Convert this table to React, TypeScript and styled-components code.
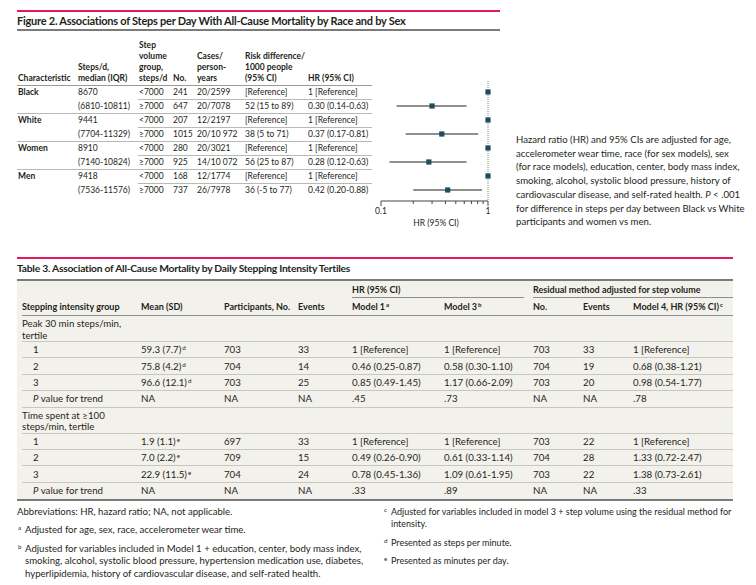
import React from "react";
import styled, { createGlobalStyle } from "styled-components";

const GlobalStyle = createGlobalStyle`
  html, body { margin: 0; padding: 0; background: #fff; }
  body {
    font-family: Lato, "Liberation Sans", sans-serif;
    color: #231f20;
    -webkit-font-smoothing: antialiased;
  }
  *, *::before, *::after { box-sizing: border-box; }
`;

const PINK = "#e6195f";
const RULE = "#7b7b7b";
const BEIGE = "#f3f1eb";
const TEAL = "#1f4d5b";

// ---------- Figure 2 data ----------
type FigRow = {
  name: string;
  median: string;
  iqr: string;
  rows: { group: string; n: string; cases: string; risk: string; hr: string; est?: number; lo?: number; hi?: number }[];
};

const figRows: FigRow[] = [
  {
    name: "Black",
    median: "8670",
    iqr: "(6810-10811)",
    rows: [
      { group: "<7000", n: "241", cases: "20/2599", risk: "[Reference]", hr: "1 [Reference]" },
      { group: "≥7000", n: "647", cases: "20/7078", risk: "52 (15 to 89)", hr: "0.30 (0.14-0.63)", est: 0.3, lo: 0.14, hi: 0.63 },
    ],
  },
  {
    name: "White",
    median: "9441",
    iqr: "(7704-11329)",
    rows: [
      { group: "<7000", n: "207", cases: "12/2197", risk: "[Reference]", hr: "1 [Reference]" },
      { group: "≥7000", n: "1015", cases: "20/10 972", risk: "38 (5 to 71)", hr: "0.37 (0.17-0.81)", est: 0.37, lo: 0.17, hi: 0.81 },
    ],
  },
  {
    name: "Women",
    median: "8910",
    iqr: "(7140-10824)",
    rows: [
      { group: "<7000", n: "280", cases: "20/3021", risk: "[Reference]", hr: "1 [Reference]" },
      { group: "≥7000", n: "925", cases: "14/10 072", risk: "56 (25 to 87)", hr: "0.28 (0.12-0.63)", est: 0.28, lo: 0.12, hi: 0.63 },
    ],
  },
  {
    name: "Men",
    median: "9418",
    iqr: "(7536-11576)",
    rows: [
      { group: "<7000", n: "168", cases: "12/1774", risk: "[Reference]", hr: "1 [Reference]" },
      { group: "≥7000", n: "737", cases: "26/7978", risk: "36 (-5 to 77)", hr: "0.42 (0.20-0.88)", est: 0.42, lo: 0.2, hi: 0.88 },
    ],
  },
];

// ---------- Table 3 data ----------
type T3Row = { label: string; mean: string; sup?: string; cells: string[] };
type T3Group = { label: string[]; rows: T3Row[] };

const t3Groups: T3Group[] = [
  {
    label: ["Peak 30 min steps/min,", "tertile"],
    rows: [
      { label: "1", mean: "59.3 (7.7)", sup: "d", cells: ["703", "33", "1 [Reference]", "1 [Reference]", "703", "33", "1 [Reference]"] },
      { label: "2", mean: "75.8 (4.2)", sup: "d", cells: ["704", "14", "0.46 (0.25-0.87)", "0.58 (0.30-1.10)", "704", "19", "0.68 (0.38-1.21)"] },
      { label: "3", mean: "96.6 (12.1)", sup: "d", cells: ["703", "25", "0.85 (0.49-1.45)", "1.17 (0.66-2.09)", "703", "20", "0.98 (0.54-1.77)"] },
      { label: "P", mean: "NA", cells: ["NA", "NA", ".45", ".73", "NA", "NA", ".78"] },
    ],
  },
  {
    label: ["Time spent at ≥100", "steps/min, tertile"],
    rows: [
      { label: "1", mean: "1.9 (1.1)", sup: "e", cells: ["697", "33", "1 [Reference]", "1 [Reference]", "703", "22", "1 [Reference]"] },
      { label: "2", mean: "7.0 (2.2)", sup: "e", cells: ["709", "15", "0.49 (0.26-0.90)", "0.61 (0.33-1.14)", "704", "28", "1.33 (0.72-2.47)"] },
      { label: "3", mean: "22.9 (11.5)", sup: "e", cells: ["704", "24", "0.78 (0.45-1.36)", "1.09 (0.61-1.95)", "703", "22", "1.38 (0.73-2.61)"] },
      { label: "P", mean: "NA", cells: ["NA", "NA", ".33", ".89", "NA", "NA", ".33"] },
    ],
  },
];

const t3Widths = [119, 83, 74, 54, 92, 89, 50, 50, 100];
const figCols = [60, 61, 34, 24, 48, 63, 65];

// ---------- layout ----------
const Page = styled.div`
  width: 756px;
  height: 585px;
  overflow: hidden;
  padding: 10px 0 0 17px;
`;

const FigureRow = styled.div`
  display: flex;
  gap: 16px;
`;

const Panel = styled.section<{ $width: number }>`
  width: ${(p) => p.$width}px;
  border-top: 2px solid ${PINK};
`;

const Title = styled.h2<{ $size: number; $pad: string }>`
  margin: 0;
  padding: ${(p) => p.$pad};
  font-size: ${(p) => p.$size}px;
  line-height: 13px;
  font-weight: 700;
  letter-spacing: -0.25px;
  white-space: nowrap;
  border-bottom: 2px solid ${RULE};
`;

const FigBody = styled.div`
  display: flex;
  align-items: flex-start;
  margin-top: 9px;
`;

const FigTable = styled.table`
  border-collapse: collapse;
  font-size: 8.5px;
  table-layout: fixed;
  width: 355px;
`;

const Col = styled.col<{ $w: number }>`
  width: ${(p) => p.$w}px;
`;

const FigTh = styled.th`
  text-align: left;
  vertical-align: bottom;
  font-weight: 700;
  line-height: 11px;
  padding: 0 0 1px 1px;
  border-bottom: 1px solid #9a9a9a;
`;

const FigTd = styled.td<{ $line?: boolean; $bold?: boolean }>`
  height: 14px;
  line-height: 13px;
  padding: 0 0 0 1px;
  white-space: nowrap;
  font-weight: ${(p) => (p.$bold ? 700 : 400)};
  border-bottom: 1px solid ${(p) => (p.$line ? "#b8b8b8" : "transparent")};
`;

const Plot = styled.svg`
  display: block;
  flex: none;
`;

const Note = styled.p`
  align-self: flex-end;
  margin: 0;
  width: 224px;
  font-size: 9.6px;
  line-height: 13.7px;
  white-space: nowrap;
  padding-bottom: 1px;
`;

const Table3Panel = styled(Panel)`
  margin-top: 27px;
`;

const Beige = styled.div`
  background: ${BEIGE};
  padding-left: 5px;
  border-bottom: 2px solid ${RULE};
`;

const T3 = styled.table`
  border-collapse: collapse;
  table-layout: fixed;
  width: 711px;
  font-size: 9.7px;
`;

const T3Head = styled.th<{ $rule?: boolean }>`
  text-align: left;
  font-weight: 700;
  font-size: 9px;
  line-height: 12px;
  padding: 3px 0 ${(p) => (p.$rule ? 2 : 0)}px;
  white-space: nowrap;
  border-bottom: ${(p) => (p.$rule ? `1px solid #8e8e8e` : "none")};
`;

const SpanLabel = styled.div<{ $gap: number }>`
  margin-right: ${(p) => p.$gap}px;
  padding-bottom: 1px;
  border-bottom: 1px solid #8e8e8e;
`;

const GroupCell = styled.td`
  padding: 2px 0 0;
  line-height: 11.5px;
  border-bottom: 1px solid #c9c6be;
`;

const T3Td = styled.td<{ $indent?: boolean; $last?: boolean }>`
  height: 16.4px;
  line-height: 15px;
  padding: 0 0 0 ${(p) => (p.$indent ? 11 : 0)}px;
  white-space: nowrap;
  border-bottom: ${(p) => (p.$last ? "none" : "1px solid #c9c6be")};
`;

const Sup = styled.sup`
  font-size: 6.2px;
  line-height: 0;
  vertical-align: 3px;
  margin-left: 1px;
`;

const Notes = styled.div`
  display: grid;
  grid-template-columns: 366px 350px;
  margin-top: 5px;
  line-height: 12.6px;
  white-space: nowrap;
`;

const NoteCol = styled.div<{ $size: number }>`
  display: flex;
  flex-direction: column;
  gap: 6px;
  font-size: ${(p) => p.$size}px;
`;

const Foot = styled.div<{ $mark?: boolean }>`
  padding-left: ${(p) => (p.$mark ? 8 : 0)}px;
  position: relative;
`;

const Mark = styled.span`
  position: absolute;
  left: 1px;
  top: -2px;
  font-size: 6.2px;
`;

// ---------- forest plot ----------
const X0 = 9;
const SPAN = 107;
const xOf = (v: number) => X0 + (Math.log10(v) + 1) * SPAN;
const rowY = (i: number) => 52 + 14 * i;

const Forest = () => {
  const ticks = [0.2, 0.3, 0.4, 0.5, 0.6, 0.7, 0.8, 0.9];
  const axisY = 161;
  const pts: { y: number; est: number; lo?: number; hi?: number }[] = [];
  figRows.forEach((g, gi) =>
    g.rows.forEach((r, ri) => {
      pts.push({ y: rowY(gi * 2 + ri), est: r.est ?? 1, lo: r.lo, hi: r.hi });
    })
  );
  return (
    <Plot width={128} height={190} viewBox="0 0 128 190">
      <line x1={xOf(1)} y1={41} x2={xOf(1)} y2={axisY} stroke="#8a8a8a" strokeWidth={1} strokeDasharray="1 1" />
      {pts.map((p, i) => (
        <g key={i}>
          {p.lo !== undefined && p.hi !== undefined && (
            <line x1={xOf(p.lo)} y1={p.y} x2={xOf(p.hi)} y2={p.y} stroke="#6a6a6a" strokeWidth={1.4} />
          )}
          <rect x={xOf(p.est) - 2.6} y={p.y - 2.6} width={5.2} height={5.2} fill={TEAL} />
        </g>
      ))}
      <line x1={xOf(0.1)} y1={axisY} x2={xOf(1)} y2={axisY} stroke="#444" strokeWidth={1} />
      <line x1={xOf(0.1)} y1={axisY} x2={xOf(0.1)} y2={axisY + 5} stroke="#444" strokeWidth={1} />
      <line x1={xOf(1)} y1={axisY} x2={xOf(1)} y2={axisY + 5} stroke="#444" strokeWidth={1} />
      {ticks.map((t) => (
        <line key={t} x1={xOf(t)} y1={axisY} x2={xOf(t)} y2={axisY + 3} stroke="#444" strokeWidth={1} />
      ))}
      <text x={xOf(0.1)} y={174} fontSize={8.5} textAnchor="middle" fill="#231f20" fontFamily="Lato, sans-serif">0.1</text>
      <text x={xOf(1)} y={174} fontSize={8.5} textAnchor="middle" fill="#231f20" fontFamily="Lato, sans-serif">1</text>
      <text x={64} y={186} fontSize={8.5} textAnchor="middle" fill="#231f20" fontFamily="Lato, sans-serif">HR (95% CI)</text>
    </Plot>
  );
};

export default function App() {
  return (
    <Page>
      <GlobalStyle />
      <FigureRow>
        <Panel $width={483}>
          <Title $size={11} $pad="2px 0">
            Figure 2. Associations of Steps per Day With All-Cause Mortality by Race and by Sex
          </Title>
          <FigBody>
            <FigTable>
              <colgroup>
                {figCols.map((w, i) => (
                  <Col key={i} $w={w} />
                ))}
              </colgroup>
              <thead>
                <tr>
                  <FigTh>Characteristic</FigTh>
                  <FigTh>Steps/d,<br />median (IQR)</FigTh>
                  <FigTh>Step<br />volume<br />group,<br />steps/d</FigTh>
                  <FigTh>No.</FigTh>
                  <FigTh>Cases/<br />person-<br />years</FigTh>
                  <FigTh>Risk difference/<br />1000 people<br />(95% CI)</FigTh>
                  <FigTh>HR (95% CI)</FigTh>
                </tr>
              </thead>
              <tbody>
                {figRows.map((g, gi) => {
                  const lastGroup = gi === figRows.length - 1;
                  return (
                    <React.Fragment key={g.name}>
                      <tr>
                        <FigTd $bold>{g.name}</FigTd>
                        <FigTd>{g.median}</FigTd>
                        <FigTd $line>{g.rows[0].group}</FigTd>
                        <FigTd $line>{g.rows[0].n}</FigTd>
                        <FigTd $line>{g.rows[0].cases}</FigTd>
                        <FigTd $line>{g.rows[0].risk}</FigTd>
                        <FigTd $line>{g.rows[0].hr}</FigTd>
                      </tr>
                      <tr>
                        <FigTd $line={!lastGroup} />
                        <FigTd $line={!lastGroup}>{g.iqr}</FigTd>
                        <FigTd $line={!lastGroup}>{g.rows[1].group}</FigTd>
                        <FigTd $line={!lastGroup}>{g.rows[1].n}</FigTd>
                        <FigTd $line={!lastGroup}>{g.rows[1].cases}</FigTd>
                        <FigTd $line={!lastGroup}>{g.rows[1].risk}</FigTd>
                        <FigTd $line={!lastGroup}>{g.rows[1].hr}</FigTd>
                      </tr>
                    </React.Fragment>
                  );
                })}
              </tbody>
            </FigTable>
            <Forest />
          </FigBody>
        </Panel>
        <Note>
          Hazard ratio (HR) and 95% CIs are adjusted for age,<br />
          accelerometer wear time, race (for sex models), sex<br />
          (for race models), education, center, body mass index,<br />
          smoking, alcohol, systolic blood pressure, history of<br />
          cardiovascular disease, and self-rated health. <i>P</i> &lt; .001<br />
          for difference in steps per day between Black vs White<br />
          participants and women vs men.
        </Note>
      </FigureRow>

      <Table3Panel $width={716}>
        <Title $size={10.3} $pad="3px 0 4px">
          Table 3. Association of All-Cause Mortality by Daily Stepping Intensity Tertiles
        </Title>
        <Beige>
          <T3>
            <colgroup>
              {t3Widths.map((w, i) => (
                <Col key={i} $w={w} />
              ))}
            </colgroup>
            <thead>
              <tr>
                <T3Head colSpan={4} />
                <T3Head colSpan={2}>
                  <SpanLabel $gap={9}>HR (95% CI)</SpanLabel>
                </T3Head>
                <T3Head colSpan={3}>
                  <SpanLabel $gap={0}>Residual method adjusted for step volume</SpanLabel>
                </T3Head>
              </tr>
              <tr>
                <T3Head $rule>Stepping intensity group</T3Head>
                <T3Head $rule>Mean (SD)</T3Head>
                <T3Head $rule>Participants, No.</T3Head>
                <T3Head $rule>Events</T3Head>
                <T3Head $rule>
                  Model 1<Sup>a</Sup>
                </T3Head>
                <T3Head $rule>
                  Model 3<Sup>b</Sup>
                </T3Head>
                <T3Head $rule>No.</T3Head>
                <T3Head $rule>Events</T3Head>
                <T3Head $rule>
                  Model 4, HR (95% CI)<Sup>c</Sup>
                </T3Head>
              </tr>
            </thead>
            <tbody>
              {t3Groups.map((g, gi) => (
                <React.Fragment key={gi}>
                  <tr>
                    <GroupCell colSpan={9}>
                      {g.label[0]}
                      <br />
                      {g.label[1]}
                    </GroupCell>
                  </tr>
                  {g.rows.map((r, ri) => {
                    const last = gi === t3Groups.length - 1 && ri === g.rows.length - 1;
                    return (
                      <tr key={ri}>
                        <T3Td $indent $last={last}>
                          {r.label === "P" ? (
                            <>
                              <i>P</i> value for trend
                            </>
                          ) : (
                            r.label
                          )}
                        </T3Td>
                        <T3Td $last={last}>
                          {r.mean}
                          {r.sup && <Sup>{r.sup}</Sup>}
                        </T3Td>
                        {r.cells.map((c, ci) => (
                          <T3Td key={ci} $last={last}>
                            {c}
                          </T3Td>
                        ))}
                      </tr>
                    );
                  })}
                </React.Fragment>
              ))}
            </tbody>
          </T3>
        </Beige>
        <Notes>
          <NoteCol $size={9.6}>
            <Foot>Abbreviations: HR, hazard ratio; NA, not applicable.</Foot>
            <Foot $mark>
              <Mark>a</Mark>Adjusted for age, sex, race, accelerometer wear time.
            </Foot>
            <Foot $mark>
              <Mark>b</Mark>Adjusted for variables included in Model 1 + education, center, body mass index,
              <br />
              smoking, alcohol, systolic blood pressure, hypertension medication use, diabetes,
              <br />
              hyperlipidemia, history of cardiovascular disease, and self-rated health.
            </Foot>
          </NoteCol>
          <NoteCol $size={9}>
            <Foot $mark>
              <Mark>c</Mark>Adjusted for variables included in model 3 + step volume using the residual method for
              <br />
              intensity.
            </Foot>
            <Foot $mark>
              <Mark>d</Mark>Presented as steps per minute.
            </Foot>
            <Foot $mark>
              <Mark>e</Mark>Presented as minutes per day.
            </Foot>
          </NoteCol>
        </Notes>
      </Table3Panel>
    </Page>
  );
}
